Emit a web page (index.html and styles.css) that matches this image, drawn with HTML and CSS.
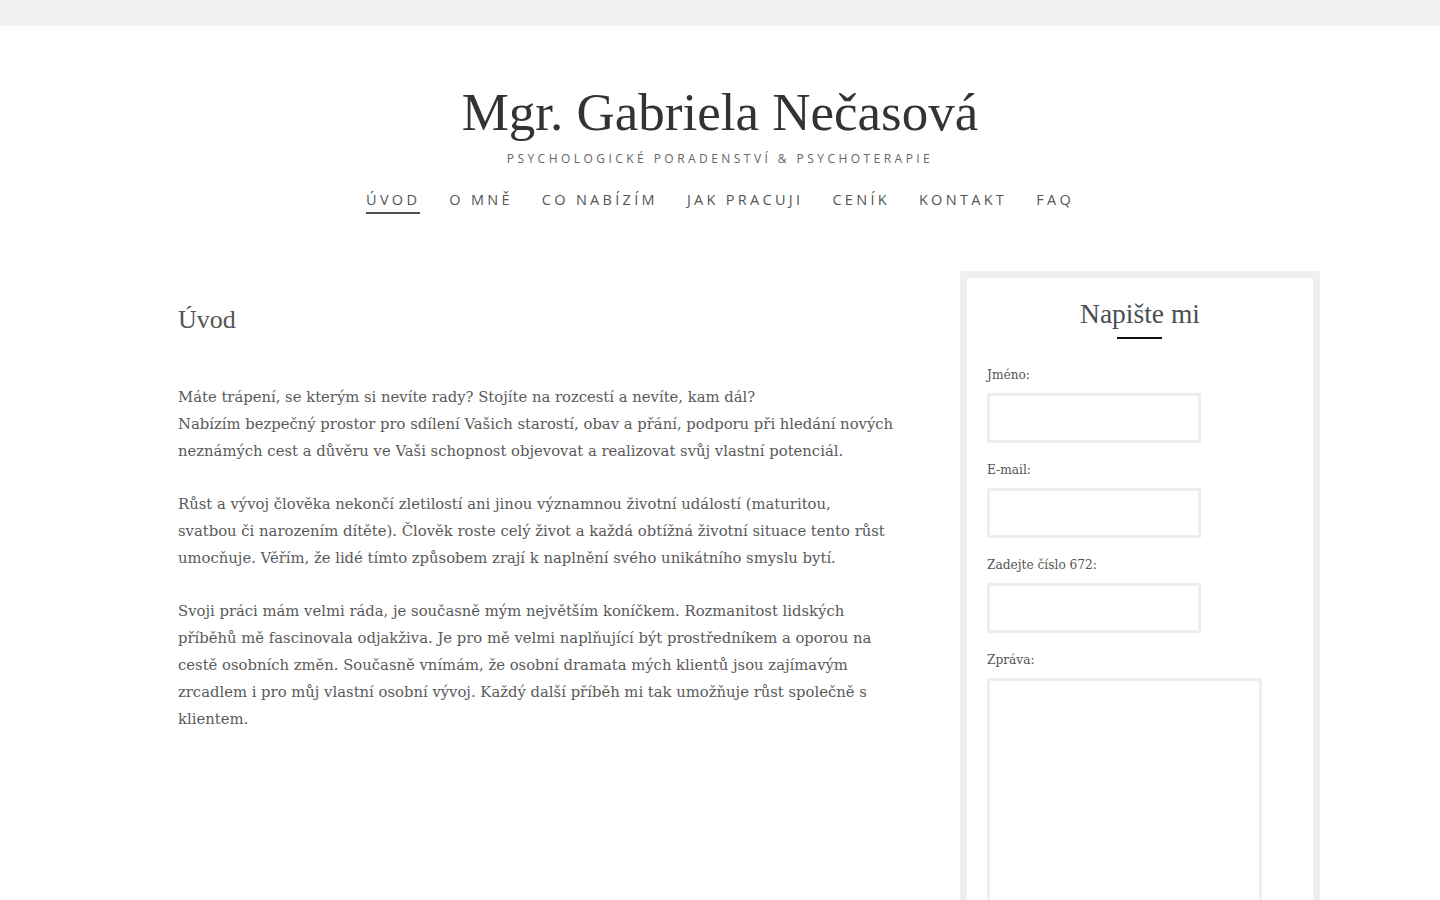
FILE: index.html
```html
<!DOCTYPE html>
<html lang="cs">
<head>
<meta charset="utf-8">
<title>Mgr. Gabriela Nečasová</title>
<link rel="stylesheet" href="styles.css">
</head>
<body>
<div class="topbar"></div>
<header class="site-header">
  <h1 class="site-title">Mgr. Gabriela Nečasová</h1>
  <p class="site-tagline">Psychologické poradenství &amp; psychoterapie</p>
  <nav class="main-nav">
    <a class="nav-item active" href="#">Úvod</a>
    <a class="nav-item" href="#">O mně</a>
    <a class="nav-item" href="#">Co nabízím</a>
    <a class="nav-item" href="#">Jak pracuji</a>
    <a class="nav-item" href="#">Ceník</a>
    <a class="nav-item" href="#">Kontakt</a>
    <a class="nav-item" href="#">FAQ</a>
  </nav>
</header>
<div class="layout">
  <main class="content">
    <h2 class="page-title">Úvod</h2>
    <p>Máte trápení, se kterým si nevíte rady? Stojíte na rozcestí a nevíte, kam dál?<br>Nabízím bezpečný prostor pro sdílení Vašich starostí, obav a přání, podporu při hledání nových neznámých cest a důvěru ve Vaši schopnost objevovat a realizovat svůj vlastní potenciál.</p>
    <p>Růst a vývoj člověka nekončí zletilostí ani jinou významnou životní událostí (maturitou, svatbou&nbsp;či narozením dítěte). Člověk roste celý život a každá obtížná životní situace tento růst umocňuje. Věřím, že lidé tímto způsobem zrají k naplnění svého unikátního smyslu bytí.</p>
    <p>Svoji práci mám velmi ráda, je současně mým největším koníčkem. Rozmanitost lidských příběhů mě fascinovala odjakživa. Je pro mě velmi naplňující být prostředníkem a oporou na cestě osobních změn. Současně vnímám, že osobní dramata mých klientů jsou zajímavým zrcadlem i pro můj vlastní osobní vývoj. Každý další příběh mi tak umožňuje růst společně s klientem.</p>
  </main>
  <aside class="sidebar">
    <div class="widget">
      <h3 class="widget-title">Napište mi</h3>
      <form class="contact-form">
        <label class="field">
          <span class="field-label">Jméno:</span>
          <input class="field-input" type="text">
        </label>
        <label class="field">
          <span class="field-label">E-mail:</span>
          <input class="field-input" type="text">
        </label>
        <label class="field">
          <span class="field-label">Zadejte číslo 672:</span>
          <input class="field-input" type="text">
        </label>
        <label class="field">
          <span class="field-label">Zpráva:</span>
          <textarea class="field-textarea"></textarea>
        </label>
      </form>
    </div>
  </aside>
</div>
</body>
</html>
```

FILE: styles.css
```css
* { box-sizing: border-box; }
html, body { margin: 0; padding: 0; }
body {
  background: #fff;
  color: #555;
  font-family: "DejaVu Serif", "Liberation Serif", serif;
}
.topbar {
  height: 26px;
  background: #f1f1f1;
}
.site-header {
  text-align: center;
  padding-top: 52px;
}
.site-title {
  margin: 0;
  font-family: "Liberation Serif", serif;
  font-weight: 400;
  font-size: 53px;
  line-height: 68px;
  color: #333;
}
.site-tagline {
  margin: 5px 0 0;
  font-family: "Open Sans", sans-serif;
  font-size: 12px;
  line-height: 16px;
  letter-spacing: 3.45px;
  text-transform: uppercase;
  color: #666;
}
.main-nav {
  display: flex;
  justify-content: center;
  gap: 29px;
  margin-top: 23px;
}
.nav-item {
  font-family: "Open Sans", sans-serif;
  font-size: 14.5px;
  line-height: 20px;
  letter-spacing: 3.3px;
  text-transform: uppercase;
  color: #555;
  text-decoration: none;
  padding-bottom: 2px;
  border-bottom: 2px solid transparent;
}
.nav-item.active {
  border-bottom-color: #4a5257;
}
.layout {
  width: 1200px;
  margin: 57px auto 0;
  display: grid;
  grid-template-columns: 780px 360px;
  column-gap: 60px;
}
.content {
  padding-left: 58px;
  padding-top: 31px;
}
.page-title {
  margin: 0 0 45px;
  font-family: "Liberation Serif", serif;
  font-weight: 400;
  font-size: 26px;
  line-height: 36px;
  color: #555;
}
.content p {
  margin: 0 0 26px;
  font-size: 14.8px;
  line-height: 27px;
  color: #5a5a5a;
}
.widget {
  border: 7px solid #efefef;
  border-bottom: none;
  padding: 18px 20px 0;
  min-height: 640px;
}
.widget-title {
  margin: 0 auto 17px;
  font-family: "Liberation Serif", serif;
  font-weight: 400;
  font-size: 27.5px;
  line-height: 36px;
  color: #4a4f55;
  text-align: center;
  width: max-content;
  padding-bottom: 10px;
}
.widget-title::after {
  content: "";
  display: block;
  width: 45px;
  height: 2px;
  background: #111;
  margin: 5px auto 0;
}
.contact-form {
  display: flex;
  flex-direction: column;
  gap: 18px;
}
.field {
  display: flex;
  flex-direction: column;
  align-items: flex-start;
  gap: 9px;
}
.field-label {
  font-size: 12.2px;
  line-height: 18px;
  color: #555;
}
.field-input {
  width: 214px;
  height: 50px;
  border: 3px solid #eee;
  background: #fff;
  outline: none;
}
.field-textarea {
  width: 275px;
  height: 260px;
  border: 3px solid #eee;
  background: #fff;
  resize: none;
  outline: none;
}
```
